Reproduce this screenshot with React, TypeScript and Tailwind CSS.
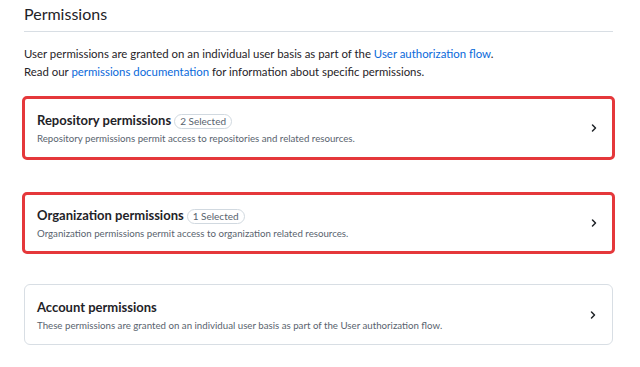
import React from "react";

function Chevron() {
  return (
    <svg width="12" height="12" viewBox="0 0 16 16" className="shrink-0">
      <path
        d="M6 4l4 4-4 4"
        fill="none"
        stroke="#1f2328"
        strokeWidth="2"
        strokeLinecap="round"
        strokeLinejoin="round"
      />
    </svg>
  );
}

function Card({
  title,
  badge,
  desc,
  red,
  h,
}: {
  title: string;
  badge?: string;
  desc: string;
  red?: boolean;
  h: string;
}) {
  return (
    <div
      className={
        (red
          ? "mx-[-2px] rounded-[5px] border-[3px] border-[#e5383b] pl-[12px] pr-[12px] "
          : "rounded-[6px] border border-[#d8dee4] pl-[12px] pr-[13px] ") +
        h +
        " bg-white flex items-center"
      }
    >
      <div className="flex-1 flex flex-col pt-[1px]">
        <div className="flex items-center gap-[3px] h-[18px]">
          <span className="text-[13px] font-bold text-[#1f2328]">{title}</span>
          {badge && (
            <span className="text-[10px] leading-[13px] px-[5px] rounded-full border border-[#d1d9e0] text-[#59636e]">
              {badge}
            </span>
          )}
        </div>
        <div className="text-[9.7px] leading-[14px] text-[#59636e] mt-[1px]">{desc}</div>
      </div>
      <Chevron />
    </div>
  );
}

export default function App() {
  return (
    <div
      className="w-[640px] h-[367px] bg-white px-[24px] pr-[27px] overflow-hidden"
      style={{ fontFamily: 'Lato, "Noto Sans", sans-serif' }}
    >
      <div className="pt-[3px] pb-[6px] border-b border-[#d8dee4] text-[16px] leading-[22px] text-[#1f2328]">
        Permissions
      </div>
      <div className="mt-[13px] text-[11.4px] leading-[18px] text-[#1f2328]">
        <div>
          User permissions are granted on an individual user basis as part of the{" "}
          <span className="text-[#0969da]">User authorization flow</span>.
        </div>
        <div>
          Read our <span className="text-[#0969da]">permissions documentation</span> for information
          about specific permissions.
        </div>
      </div>
      <div className="mt-[15px]">
        <Card
          red
          h="h-[64px]"
          title="Repository permissions"
          badge="2 Selected"
          desc="Repository permissions permit access to repositories and related resources."
        />
      </div>
      <div className="mt-[32px]">
        <Card
          red
          h="h-[62px]"
          title="Organization permissions"
          badge="1 Selected"
          desc="Organization permissions permit access to organization related resources."
        />
      </div>
      <div className="mt-[30px]">
        <Card
          h="h-[61px]"
          title="Account permissions"
          desc="These permissions are granted on an individual user basis as part of the User authorization flow."
        />
      </div>
    </div>
  );
}
